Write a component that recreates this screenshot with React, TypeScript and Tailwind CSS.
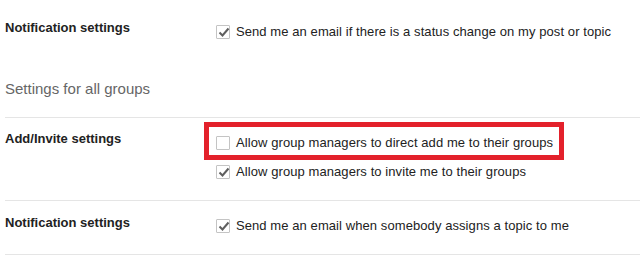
import React from "react";

function Box({ checked }: { checked: boolean }) {
  return (
    <span className="relative inline-block w-[14px] h-[14px] shrink-0 border border-[#c4c4c4] rounded-[1px] bg-white">
      {checked && (
        <svg
          className="absolute left-[-1px] top-[-1px]"
          width="15"
          height="15"
          viewBox="0 0 15 15"
        >
          <polyline
            points="3.5,7.5 6.5,10.5 12.5,3.5"
            fill="none"
            stroke="#5f5f5f"
            strokeWidth="2"
          />
        </svg>
      )}
    </span>
  );
}

function Option({
  checked,
  children,
  highlight,
}: {
  checked: boolean;
  children: React.ReactNode;
  highlight?: boolean;
}) {
  return (
    <div className="relative flex items-center gap-[6px] h-[16px] leading-[16px] text-[13px] tracking-[0.08px] text-[#222]">
      {highlight && (
        <div className="absolute left-[-12px] top-[-13px] w-[360px] h-[38px] border-[5px] border-[#e3212b]" />
      )}
      <Box checked={checked} />
      <span>{children}</span>
    </div>
  );
}

function Label({ children, offset }: { children: React.ReactNode; offset?: boolean }) {
  return (
    <div
      className={
        offset
          ? "w-[211px] shrink-0 pt-[2px] text-[13px] leading-[16px] font-bold text-[#222]"
          : "w-[211px] shrink-0 pt-[1px] text-[13px] leading-[16px] font-bold text-[#222]"
      }
    >
      {children}
    </div>
  );
}

export default function App() {
  return (
    <div
      className="w-[640px] h-[256px] bg-white overflow-hidden pl-[5px]"
      style={{ fontFamily: '"Liberation Sans", Arial, sans-serif' }}
    >
      <div className="flex pt-[18px]">
        <Label offset>Notification settings</Label>
        <div className="pt-[6px]">
          <Option checked>
            Send me an email if there is a status change on my post or topic
          </Option>
        </div>
      </div>

      <div className="mt-[40px] text-[15px] leading-[18px] text-[#666]">
        Settings for all groups
      </div>

      <div className="mt-[19px] h-px bg-[#e5e5e5]" />

      <div className="flex pt-[12px] h-[82px]">
        <Label>Add/Invite settings</Label>
        <div className="pt-[5px] flex flex-col gap-[13px]">
          <Option checked={false} highlight>
            Allow group managers to direct add me to their groups
          </Option>
          <Option checked>Allow group managers to invite me to their groups</Option>
        </div>
      </div>

      <div className="h-px bg-[#e5e5e5]" />

      <div className="flex pt-[13px] h-[53px]">
        <Label>Notification settings</Label>
        <div className="pt-[4px]">
          <Option checked>Send me an email when somebody assigns a topic to me</Option>
        </div>
      </div>

      <div className="h-px bg-[#e5e5e5]" />
    </div>
  );
}
